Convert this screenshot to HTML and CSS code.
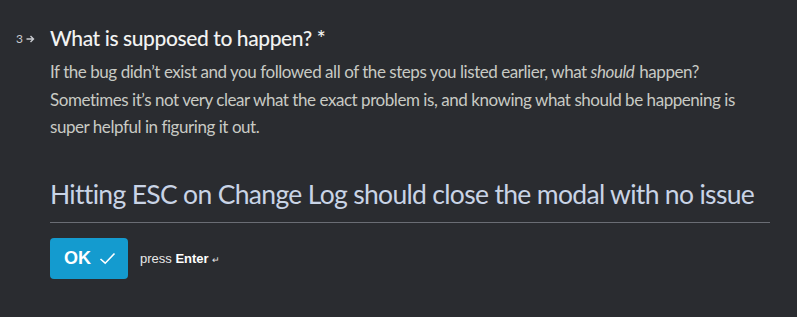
FILE: index.html
```html
<!DOCTYPE html>
<html>
<head>
<meta charset="utf-8">
<link rel="stylesheet" href="styles.css">
</head>
<body>
<div class="question">
  <div class="num">3<svg class="arrow" width="9" height="8" viewBox="0 0 9 8"><path d="M0.5 4H7.5M4.5 1L7.5 4L4.5 7" fill="none" stroke="currentColor" stroke-width="1.4"/></svg></div>
  <div class="content">
    <h1 class="title">What is supposed to happen? *</h1>
    <p class="desc">If the bug didn’t exist and you followed all of the steps you listed earlier, what <em>should</em> happen? Sometimes it’s not very clear what the exact problem is, and knowing what should be happening is super helpful in figuring it out.</p>
    <div class="answer">Hitting ESC on Change Log should close the modal with no issue</div>
    <div class="actions">
      <button class="ok">OK <svg width="17" height="13" viewBox="0 0 17 13"><path d="M1.5 7L6.2 11.2L15.5 1.5" fill="none" stroke="currentColor" stroke-width="1.6"/></svg></button>
      <span class="hint">press <b>Enter</b> <span class="ret">↵</span></span>
    </div>
  </div>
</div>
</body>
</html>
```
FILE: styles.css
```css
html, body {
  margin: 0;
  background: #2a2c30;
  height: 100%;
}
body {
  font-family: Lato, "Open Sans", sans-serif;
}
.question {
  display: flex;
  padding: 26px 0 0 16px;
}
.num {
  width: 34px;
  display: flex;
  align-items: center;
  gap: 3px;
  height: 22px;
  margin-top: 1px;
  color: #c9cbd0;
  font-size: 12px;
}
.arrow { margin-top: 1px; }
.content {
  width: 720px;
}
.title {
  margin: 0;
  font-size: 21px;
  letter-spacing: -0.4px;
  line-height: 24px;
  font-weight: 500;
  color: #f2f3f2;
}
.desc {
  margin: 8px 0 0;
  font-size: 17px;
  letter-spacing: -0.45px;
  line-height: 27.5px;
  color: #c8cac4;
}
.desc em {
  font-style: italic;
  margin-right: 1px;
}
.answer {
  margin-top: 35px;
  font-size: 26.5px;
  letter-spacing: -0.68px;
  line-height: 36px;
  color: #c9d4e6;
  padding-bottom: 10px;
  border-bottom: 1px solid #6a6d74;
}
.actions {
  display: flex;
  align-items: center;
  margin-top: 15px;
  gap: 12px;
}
.ok {
  width: 78px;
  height: 41px;
  border: none;
  border-radius: 4px;
  background: #149bcf;
  color: #fff;
  font-family: "Liberation Sans", Arial, sans-serif;
  font-weight: bold;
  font-size: 18px;
  display: flex;
  align-items: center;
  justify-content: center;
  gap: 8px;
  padding: 0 0 0 2px;
}
.hint {
  font-family: "Liberation Sans", Arial, sans-serif;
  font-size: 13px;
  color: #e8e8e8;
}
.hint b { color: #fff; }
.ret { font-size: 9px; }
```
